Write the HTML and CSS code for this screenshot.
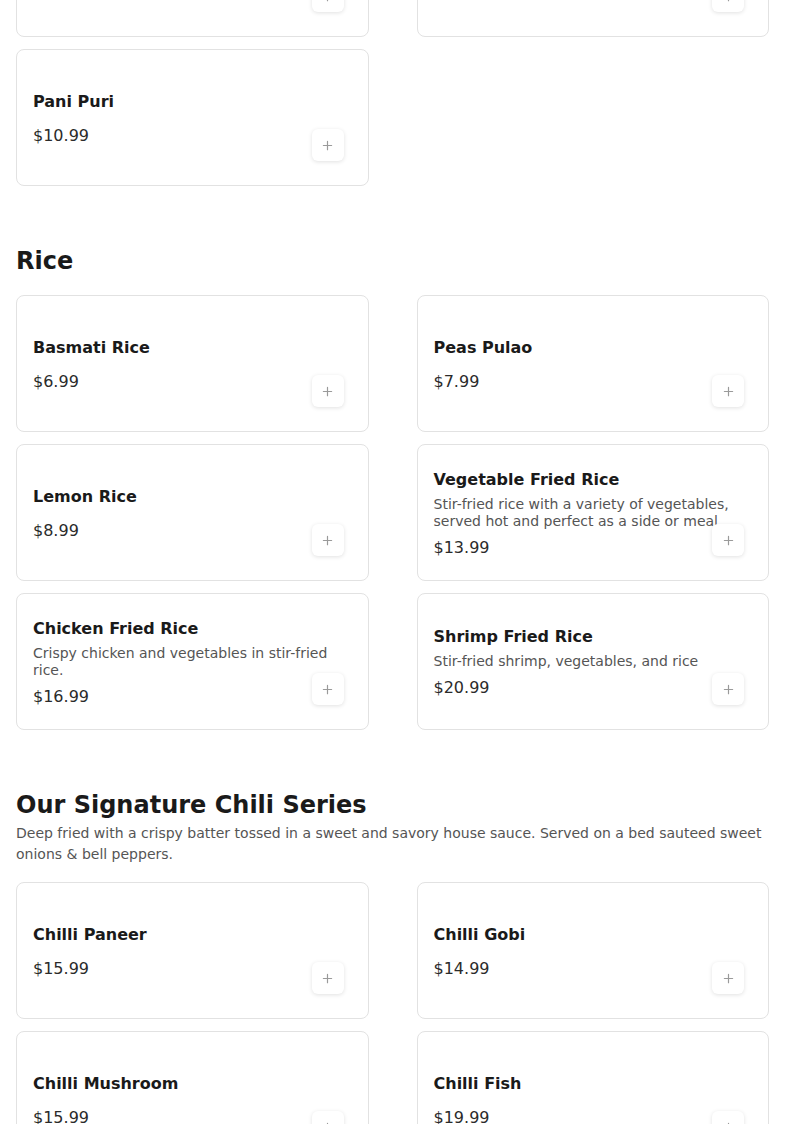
FILE: index.html
```html
<!DOCTYPE html>
<html lang="en">
<head>
<meta charset="utf-8">
<title>Menu</title>
<link rel="stylesheet" href="styles.css">
</head>
<body>
<main class="menu">
  <section class="section section-continued">
    <div class="grid">
      <article class="card">
        <div class="card-body">
          <h3 class="item-name">Aloo Tikki Chaat</h3>
          <p class="item-price">$10.99</p>
        </div>
        <button class="add-btn" aria-label="Add"><svg viewBox="0 0 12 12" width="11" height="11"><path d="M6 1.5v9M1.5 6h9" /></svg></button>
      </article>
      <article class="card">
        <div class="card-body">
          <h3 class="item-name">Dahi Puri</h3>
          <p class="item-price">$10.99</p>
        </div>
        <button class="add-btn" aria-label="Add"><svg viewBox="0 0 12 12" width="11" height="11"><path d="M6 1.5v9M1.5 6h9" /></svg></button>
      </article>
      <article class="card">
        <div class="card-body">
          <h3 class="item-name">Pani Puri</h3>
          <p class="item-price">$10.99</p>
        </div>
        <button class="add-btn" aria-label="Add"><svg viewBox="0 0 12 12" width="11" height="11"><path d="M6 1.5v9M1.5 6h9" /></svg></button>
      </article>
    </div>
  </section>

  <section class="section">
    <header class="section-head">
      <h2 class="section-title">Rice</h2>
    </header>
    <div class="grid">
      <article class="card">
        <div class="card-body">
          <h3 class="item-name">Basmati Rice</h3>
          <p class="item-price">$6.99</p>
        </div>
        <button class="add-btn" aria-label="Add"><svg viewBox="0 0 12 12" width="11" height="11"><path d="M6 1.5v9M1.5 6h9" /></svg></button>
      </article>
      <article class="card">
        <div class="card-body">
          <h3 class="item-name">Peas Pulao</h3>
          <p class="item-price">$7.99</p>
        </div>
        <button class="add-btn" aria-label="Add"><svg viewBox="0 0 12 12" width="11" height="11"><path d="M6 1.5v9M1.5 6h9" /></svg></button>
      </article>
      <article class="card">
        <div class="card-body">
          <h3 class="item-name">Lemon Rice</h3>
          <p class="item-price">$8.99</p>
        </div>
        <button class="add-btn" aria-label="Add"><svg viewBox="0 0 12 12" width="11" height="11"><path d="M6 1.5v9M1.5 6h9" /></svg></button>
      </article>
      <article class="card">
        <div class="card-body">
          <h3 class="item-name">Vegetable Fried Rice</h3>
          <p class="item-desc">Stir-fried rice with a variety of vegetables, served hot and perfect as a side or meal.</p>
          <p class="item-price">$13.99</p>
        </div>
        <button class="add-btn" aria-label="Add"><svg viewBox="0 0 12 12" width="11" height="11"><path d="M6 1.5v9M1.5 6h9" /></svg></button>
      </article>
      <article class="card">
        <div class="card-body">
          <h3 class="item-name">Chicken Fried Rice</h3>
          <p class="item-desc">Crispy chicken and vegetables in stir-fried rice.</p>
          <p class="item-price">$16.99</p>
        </div>
        <button class="add-btn" aria-label="Add"><svg viewBox="0 0 12 12" width="11" height="11"><path d="M6 1.5v9M1.5 6h9" /></svg></button>
      </article>
      <article class="card">
        <div class="card-body">
          <h3 class="item-name">Shrimp Fried Rice</h3>
          <p class="item-desc">Stir-fried shrimp, vegetables, and rice</p>
          <p class="item-price">$20.99</p>
        </div>
        <button class="add-btn" aria-label="Add"><svg viewBox="0 0 12 12" width="11" height="11"><path d="M6 1.5v9M1.5 6h9" /></svg></button>
      </article>
    </div>
  </section>

  <section class="section">
    <header class="section-head section-head-desc">
      <h2 class="section-title">Our Signature Chili Series</h2>
      <p class="section-desc">Deep fried with a crispy batter tossed in a sweet and savory house sauce. Served on a bed sauteed sweet onions &amp; bell peppers.</p>
    </header>
    <div class="grid">
      <article class="card">
        <div class="card-body">
          <h3 class="item-name">Chilli Paneer</h3>
          <p class="item-price">$15.99</p>
        </div>
        <button class="add-btn" aria-label="Add"><svg viewBox="0 0 12 12" width="11" height="11"><path d="M6 1.5v9M1.5 6h9" /></svg></button>
      </article>
      <article class="card">
        <div class="card-body">
          <h3 class="item-name">Chilli Gobi</h3>
          <p class="item-price">$14.99</p>
        </div>
        <button class="add-btn" aria-label="Add"><svg viewBox="0 0 12 12" width="11" height="11"><path d="M6 1.5v9M1.5 6h9" /></svg></button>
      </article>
      <article class="card">
        <div class="card-body">
          <h3 class="item-name">Chilli Mushroom</h3>
          <p class="item-price">$15.99</p>
        </div>
        <button class="add-btn" aria-label="Add"><svg viewBox="0 0 12 12" width="11" height="11"><path d="M6 1.5v9M1.5 6h9" /></svg></button>
      </article>
      <article class="card">
        <div class="card-body">
          <h3 class="item-name">Chilli Fish</h3>
          <p class="item-price">$19.99</p>
        </div>
        <button class="add-btn" aria-label="Add"><svg viewBox="0 0 12 12" width="11" height="11"><path d="M6 1.5v9M1.5 6h9" /></svg></button>
      </article>
    </div>
  </section>
</main>
</body>
</html>
```
FILE: styles.css
```css
html {
  overflow: hidden;
}

body {
  margin: 0;
  background: #ffffff;
  font-family: "DejaVu Sans", "Liberation Sans", sans-serif;
  color: #1a1a1a;
}

.menu {
  padding: 0 16px;
}

.section {
  margin-top: 61px;
}

.section-continued {
  margin-top: -100px;
}

.section-head {
  display: flex;
  flex-direction: column;
  gap: 4px;
  margin-bottom: 20px;
}

.section-head-desc {
  margin-bottom: 17px;
}

.section-title {
  margin: 0;
  font-size: 24px;
  line-height: 28px;
  font-weight: 700;
  color: #1a1a1a;
}

.section-desc {
  margin: 0;
  font-size: 14px;
  line-height: 21px;
  color: #555555;
}

.grid {
  display: grid;
  grid-template-columns: 1fr 1fr;
  column-gap: 48px;
  row-gap: 12px;
}

.card {
  position: relative;
  box-sizing: border-box;
  min-height: 137px;
  display: flex;
  align-items: center;
  padding: 17px 16px 15px;
  border: 1px solid #e2e2e2;
  border-radius: 8px;
  background: #ffffff;
}

.card-body {
  flex: 1;
  display: flex;
  flex-direction: column;
}

.item-name {
  margin: 0 0 4px;
  font-size: 16px;
  line-height: 24px;
  font-weight: 700;
  color: #1a1a1a;
}

.item-desc {
  margin: 0;
  font-size: 14px;
  line-height: 17px;
  color: #555555;
}

.item-price {
  margin: 6px 0 0;
  font-size: 16px;
  line-height: 24px;
  color: #2b2b2b;
}

.add-btn {
  position: absolute;
  right: 24px;
  bottom: 24px;
  width: 32px;
  height: 32px;
  padding: 0;
  display: flex;
  align-items: center;
  justify-content: center;
  border: none;
  border-radius: 6px;
  background: #ffffff;
  box-shadow: 0 1px 4px rgba(0, 0, 0, 0.12);
}

.add-btn svg path {
  fill: none;
  stroke: #9a9a9a;
  stroke-width: 1.3;
  stroke-linecap: round;
}
```
